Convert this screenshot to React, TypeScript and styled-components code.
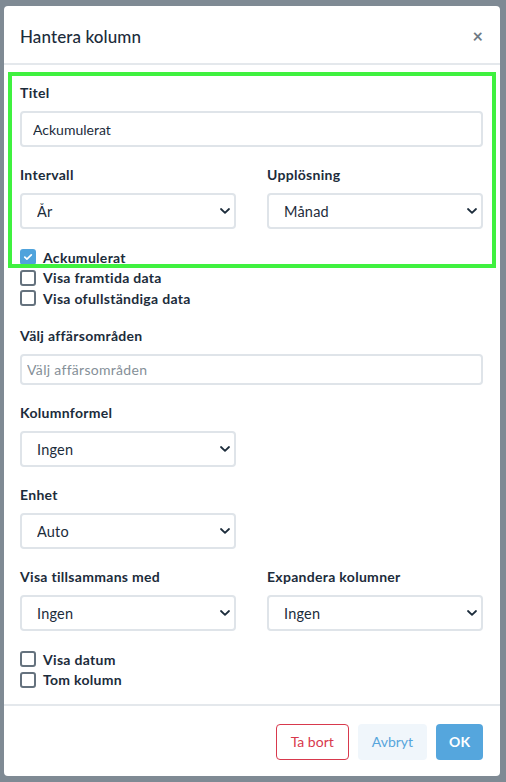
import React, { useState } from 'react';
import styled, { createGlobalStyle } from 'styled-components';

const textDark = '#1c2c3b';
const fieldBorder = '#dfe4e9';
const blue = '#55a6dd';

const GlobalStyle = createGlobalStyle`
  html, body {
    margin: 0;
    padding: 0;
    background: #7f8a94;
    font-family: Lato, "Open Sans", "Noto Sans", sans-serif;
    color: ${textDark};
  }
  * { box-sizing: border-box; }
`;

const ChevronIcon: React.FC = () => (
  <svg width="10" height="6" viewBox="0 0 10 6" fill="none">
    <path d="M1 1 L5 4.8 L9 1" stroke={textDark} strokeWidth="1.8" strokeLinecap="round" strokeLinejoin="round" />
  </svg>
);

const CheckIcon: React.FC = () => (
  <svg width="10" height="8" viewBox="0 0 10 8" fill="none">
    <path d="M1.8 4.2 L3.9 6.2 L8.3 1.8" stroke="#fff" strokeWidth="1.7" strokeLinecap="round" strokeLinejoin="round" />
  </svg>
);

type SelectProps = { value: string; options: string[] };

const Select: React.FC<SelectProps> = ({ value, options }) => (
  <SelectWrap>
    <StyledSelect defaultValue={value}>
      {options.map(o => <option key={o} value={o}>{o}</option>)}
    </StyledSelect>
    <ChevronHolder><ChevronIcon /></ChevronHolder>
  </SelectWrap>
);

type CheckProps = { label: string; initial?: boolean };

const Checkbox: React.FC<CheckProps> = ({ label, initial = false }) => {
  const [checked, setChecked] = useState(initial);
  return (
    <CheckRow onClick={() => setChecked(!checked)}>
      <CheckBox checked={checked}>{checked && <CheckIcon />}</CheckBox>
      <CheckLabel>{label}</CheckLabel>
    </CheckRow>
  );
};

const App: React.FC = () => {
  return (
    <>
      <GlobalStyle />
      <Backdrop>
        <Modal>
          <Header>
            <Title>Hantera kolumn</Title>
            <Close>×</Close>
          </Header>
          <Body>
            <Field>
              <Label>Titel</Label>
              <TextInput defaultValue="Ackumulerat" />
            </Field>
            <Row>
              <Field>
                <Label>Intervall</Label>
                <Select value="År" options={['År', 'Kvartal', 'Månad']} />
              </Field>
              <Field>
                <Label>Upplösning</Label>
                <Select value="Månad" options={['År', 'Kvartal', 'Månad']} />
              </Field>
            </Row>
            <CheckList>
              <Checkbox label="Ackumulerat" initial />
              <Checkbox label="Visa framtida data" />
              <Checkbox label="Visa ofullständiga data" />
            </CheckList>
            <Field>
              <Label>Välj affärsområden</Label>
              <MultiInput placeholder="Välj affärsområden" />
            </Field>
            <Row>
              <Field>
                <Label>Kolumnformel</Label>
                <Select value="Ingen" options={['Ingen']} />
              </Field>
            </Row>
            <Row>
              <Field>
                <Label>Enhet</Label>
                <Select value="Auto" options={['Auto']} />
              </Field>
            </Row>
            <Row>
              <Field>
                <Label>Visa tillsammans med</Label>
                <Select value="Ingen" options={['Ingen']} />
              </Field>
              <Field>
                <Label>Expandera kolumner</Label>
                <Select value="Ingen" options={['Ingen']} />
              </Field>
            </Row>
            <CheckList>
              <Checkbox label="Visa datum" />
              <Checkbox label="Tom kolumn" />
            </CheckList>
          </Body>
          <Footer>
            <Button variant="danger">Ta bort</Button>
            <Button variant="light">Avbryt</Button>
            <Button variant="primary">OK</Button>
          </Footer>
          <Highlight />
        </Modal>
      </Backdrop>
    </>
  );
};

export default App;

const Backdrop = styled.div`
  min-height: 782px;
  padding: 6px 6px 6px 4px;
  display: flex;
  align-items: flex-start;
`;

const Modal = styled.div`
  position: relative;
  width: 496px;
  background: #fff;
  border-radius: 4px;
  display: flex;
  flex-direction: column;
`;

const Header = styled.div`
  height: 59px;
  padding: 0 16px;
  display: flex;
  align-items: center;
  justify-content: space-between;
  border-bottom: 2px solid #e4e8ec;
`;

const Title = styled.h2`
  margin: 4px 0 0;
  font-size: 17px;
  font-weight: 500;
  letter-spacing: 0.1px;
  color: ${textDark};
`;

const Close = styled.span`
  font-size: 18px;
  font-weight: 700;
  color: #6f7a84;
  margin-top: 2px;
  margin-right: 1px;
  cursor: pointer;
`;

const Body = styled.div`
  padding: 18px 17px 14px 16px;
  display: flex;
  flex-direction: column;
  gap: 18px;
`;

const Field = styled.div`
  display: flex;
  flex-direction: column;
  gap: 8px;
  min-width: 0;
`;

const Row = styled.div`
  display: grid;
  grid-template-columns: 216px 216px;
  column-gap: 31px;
`;

const Label = styled.label`
  font-size: 14px;
  line-height: 20px;
  font-weight: 700;
  letter-spacing: 0.3px;
  color: ${textDark};
`;

const TextInput = styled.input`
  height: 36px;
  border: 2px solid ${fieldBorder};
  border-radius: 4px;
  padding: 0 11px;
  font-family: inherit;
  font-size: 14px;
  color: ${textDark};
  outline: none;
`;

const MultiInput = styled(TextInput)`
  height: 31px;
  padding: 0 5px;
  letter-spacing: 0.3px;
  &::placeholder { color: #858f98; }
`;

const SelectWrap = styled.div`
  position: relative;
  height: 36px;
`;

const StyledSelect = styled.select`
  appearance: none;
  width: 100%;
  height: 36px;
  border: 2px solid ${fieldBorder};
  border-radius: 4px;
  padding: 0 28px 0 15px;
  background: #fff;
  font-family: inherit;
  font-size: 14.5px;
  letter-spacing: 0.2px;
  color: ${textDark};
  outline: none;
`;

const ChevronHolder = styled.span`
  position: absolute;
  right: 6px;
  top: 15px;
  display: flex;
  pointer-events: none;
`;

const CheckList = styled.div`
  display: flex;
  flex-direction: column;
  gap: 0.5px;
`;

const CheckRow = styled.div`
  display: flex;
  align-items: center;
  gap: 7px;
  height: 20px;
  cursor: pointer;
`;

const CheckBox = styled.span<{ checked: boolean }>`
  width: 16px;
  height: 16px;
  border-radius: 3px;
  display: flex;
  align-items: center;
  justify-content: center;
  border: ${p => (p.checked ? 'none' : '2px solid #65727e')};
  background: ${p => (p.checked ? '#4fa3dc' : '#fff')};
`;

const CheckLabel = styled.span`
  font-size: 14px;
  font-weight: 700;
  letter-spacing: 0.3px;
  color: ${textDark};
`;

const Footer = styled.div`
  border-top: 2px solid #e4e8ec;
  padding: 18px 17px 16px 16px;
  display: flex;
  justify-content: flex-end;
  gap: 9px;
`;

const Button = styled.button<{ variant: 'danger' | 'light' | 'primary' }>`
  height: 36px;
  padding: 0 ${p => (p.variant === 'primary' ? 13 : 14)}px;
  border-radius: 4px;
  font-family: inherit;
  font-size: 14px;
  cursor: pointer;
  border: ${p => (p.variant === 'danger' ? '1.5px solid #d8394d' : 'none')};
  background: ${p => (p.variant === 'primary' ? blue : p.variant === 'light' ? '#f0f6fb' : '#fff')};
  color: ${p => (p.variant === 'primary' ? '#fff' : p.variant === 'light' ? '#57a5dc' : '#d8394d')};
  font-weight: ${p => (p.variant === 'primary' ? 700 : 400)};
`;

const Highlight = styled.div`
  position: absolute;
  left: 4px;
  top: 66px;
  width: 488px;
  height: 196px;
  border: 4px solid #3ff13f;
  pointer-events: none;
`;
